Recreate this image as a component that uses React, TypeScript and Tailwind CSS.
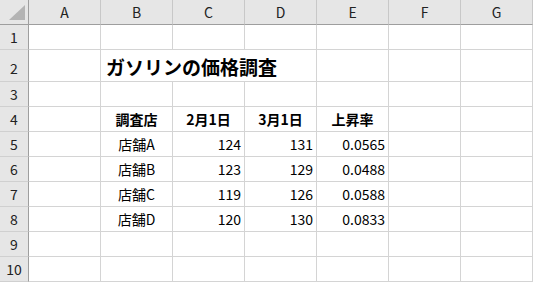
import React from "react";

const cols = ["A", "B", "C", "D", "E", "F", "G"];

type Cell = { text?: string; align?: "left" | "center" | "right"; bold?: boolean };

const rows: Cell[][] = [
  [],
  [],
  [],
  [{}, { text: "調査店", align: "center", bold: true }, { text: "2月1日", align: "center", bold: true }, { text: "3月1日", align: "center", bold: true }, { text: "上昇率", align: "center", bold: true }],
  [{}, { text: "店舗A", align: "center" }, { text: "124", align: "right" }, { text: "131", align: "right" }, { text: "0.0565", align: "right" }],
  [{}, { text: "店舗B", align: "center" }, { text: "123", align: "right" }, { text: "129", align: "right" }, { text: "0.0488", align: "right" }],
  [{}, { text: "店舗C", align: "center" }, { text: "119", align: "right" }, { text: "126", align: "right" }, { text: "0.0588", align: "right" }],
  [{}, { text: "店舗D", align: "center" }, { text: "120", align: "right" }, { text: "130", align: "right" }, { text: "0.0833", align: "right" }],
  [],
  [],
];

const font = { fontFamily: '"Noto Sans CJK JP", "Noto Sans", sans-serif' };

function RowHeader({ n, tall }: { n: number; tall?: boolean }) {
  return (
    <div
      className={`flex items-center justify-center bg-[#e6e6e6] border-r border-r-[#9e9e9e] border-b border-b-[#d0d0d0] text-[14px] text-[#222] ${tall ? "pt-[4px]" : ""}`}
    >
      {n}
    </div>
  );
}

function DataCell({ cell }: { cell?: Cell }) {
  const align =
    cell?.align === "right" ? "justify-end pr-[3px]" : cell?.align === "center" ? "justify-center" : "justify-start pl-[3px]";
  return (
    <div
      className={`flex items-center ${align} border-r border-b border-[#d4d4d4] bg-white text-[14px] text-black ${cell?.bold ? "font-bold" : ""} whitespace-nowrap`}
    >
      {cell?.text ?? ""}
    </div>
  );
}

export default function App() {
  return (
    <div
      className="grid w-[533px] h-[282px] overflow-hidden bg-white grid-cols-[29px_repeat(7,72px)] grid-rows-[25px_25px_32px_repeat(8,25px)] leading-none"
      style={font}
    >
      {/* corner */}
      <div className="relative bg-[#e6e6e6] border-r border-r-[#9e9e9e] border-b border-b-[#9e9e9e]">
        <svg className="absolute left-0 top-0" width="28" height="24" viewBox="0 0 28 24">
          <polygon points="25,5 25,20 9,20" fill="#b4b4b4" />
        </svg>
      </div>
      {cols.map((c) => (
        <div
          key={c}
          className="flex items-center justify-center bg-[#e6e6e6] border-r border-r-[#c8c8c8] border-b border-b-[#9e9e9e] text-[14px] text-[#222]"
        >
          {c}
        </div>
      ))}

      {/* row 1 */}
      <RowHeader n={1} />
      {cols.map((c) => (
        <DataCell key={"r1" + c} />
      ))}

      {/* row 2 */}
      <RowHeader n={2} tall />
      <DataCell />
      <div className="col-span-3 flex items-center pl-[5px] pt-[2px] border-r border-b border-[#d4d4d4] bg-white text-[19px] font-bold text-black whitespace-nowrap">
        ガソリンの価格調査
      </div>
      <DataCell />
      <DataCell />
      <DataCell />

      {rows.slice(2).map((r, i) => (
        <React.Fragment key={"row" + (i + 3)}>
          <RowHeader n={i + 3} />
          {cols.map((c, j) => (
            <DataCell key={c + (i + 3)} cell={r[j]} />
          ))}
        </React.Fragment>
      ))}
    </div>
  );
}
